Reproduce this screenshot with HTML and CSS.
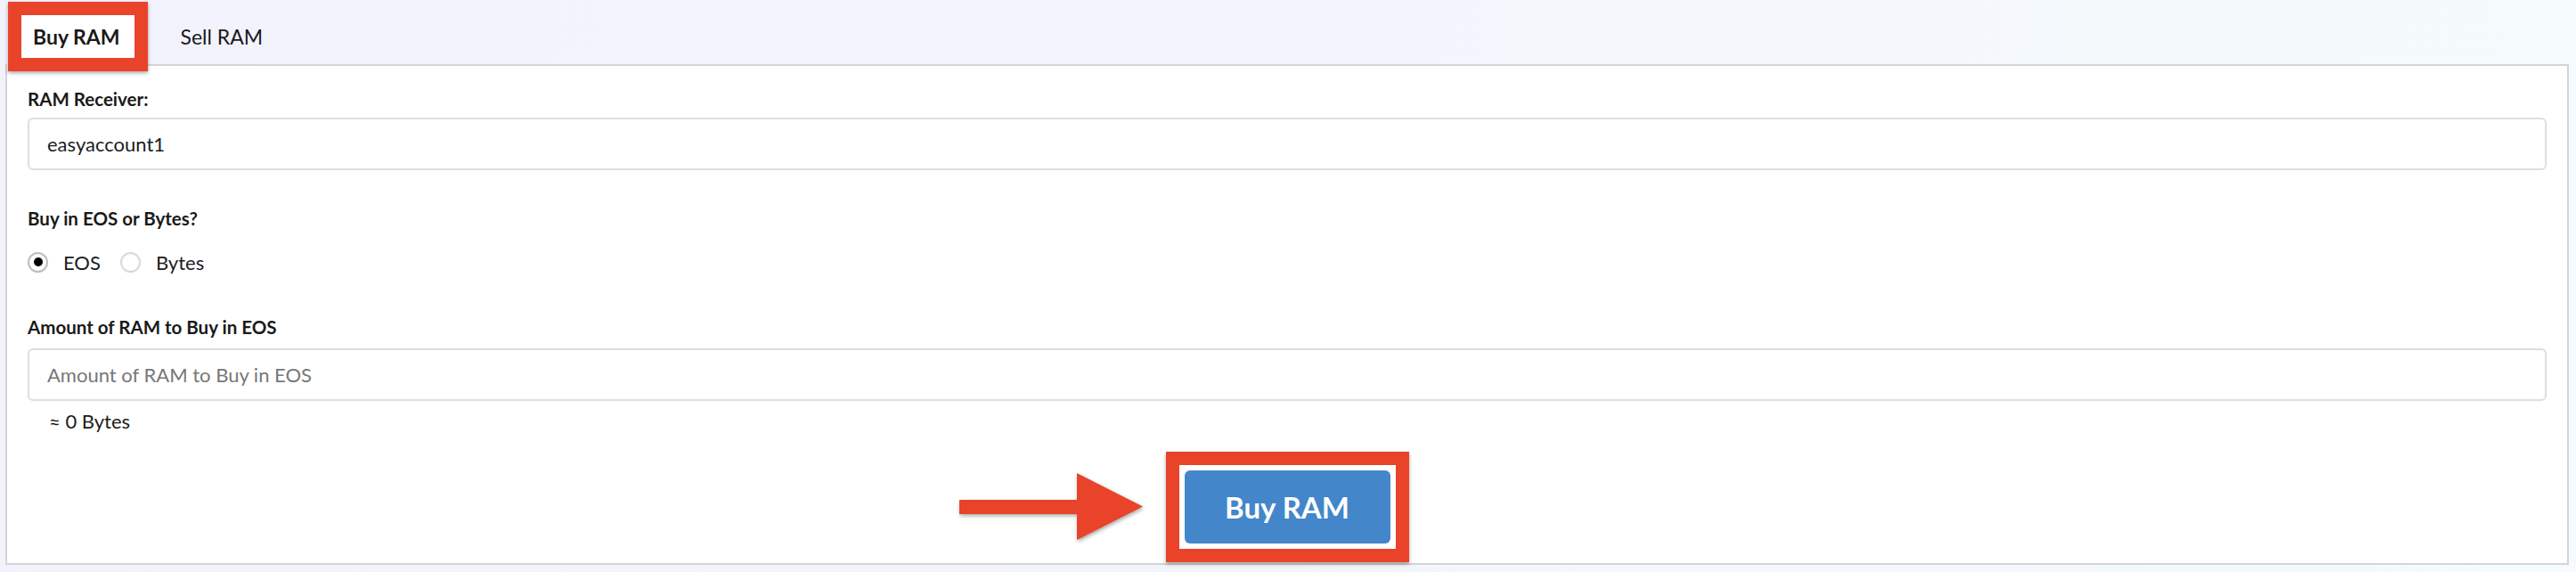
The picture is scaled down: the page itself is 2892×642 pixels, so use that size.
FILE: index.html
```html
<!DOCTYPE html>
<html lang="en">
<head>
<meta charset="utf-8">
<title>Buy RAM</title>
<link rel="stylesheet" href="styles.css">
</head>
<body>
<div class="page">
  <div class="tabs">
    <div class="tab active"><span class="tab-mark"></span>Buy RAM</div>
    <div class="tab">Sell RAM</div>
  </div>
  <div class="panel">
    <div class="lbl lbl-first">RAM Receiver:</div>
    <input class="field" type="text" value="easyaccount1">

    <div class="lbl lbl-radio">Buy in EOS or Bytes?</div>
    <div class="radios">
      <span class="radio checked"></span><span class="radio-text">EOS</span>
      <span class="radio"></span><span class="radio-text">Bytes</span>
    </div>

    <div class="lbl lbl-amount">Amount of RAM to Buy in EOS</div>
    <input class="field field-amount" type="text" placeholder="Amount of RAM to Buy in EOS">
    <div class="help">≈ 0 Bytes</div>

    <div class="actions">
      <div class="btn-mark">
        <svg class="arrow" width="206" height="75" viewBox="0 0 206 75" aria-hidden="true">
          <rect x="0" y="30" width="134" height="16" fill="#e9432a"/>
          <polygon points="132,0 206,37.5 132,75" fill="#e9432a"/>
        </svg>
        <button class="btn" type="button">Buy RAM</button>
      </div>
    </div>
  </div>
</div>
</body>
</html>
```

FILE: styles.css
```css
html, body {
  margin: 0;
  padding: 0;
}
body {
  width: 2892px;
  height: 642px;
  background: linear-gradient(90deg, #f2f2fd 0%, #f3f5fc 50%, #f5fbfc 100%);
  font-family: Lato, "Open Sans", "Liberation Sans", sans-serif;
  color: #1c1c1c;
  overflow: hidden;
}
.page {
  padding: 0 8px 8px 6px;
}
.tabs {
  display: flex;
  align-items: flex-end;
  padding-top: 10px;
  height: 62px;
  padding-left: 2px;
}
.tab {
  position: relative;
  height: 62px;
  line-height: 62px;
  padding: 0 29px;
  font-size: 23px;
  color: #1a1a1a;
}
.tab.active {
  font-weight: 700;
  background: #ffffff;
  height: 64px;
  margin-bottom: -2px;
  line-height: 62px;
  z-index: 2;
}
.tab + .tab {
  margin-left: 10px;
}
.tab-mark {
  position: absolute;
  left: 1px;
  top: -8px;
  width: 157px;
  height: 78px;
  box-sizing: border-box;
  border: 15px solid #e9432a;
  box-shadow: 0 2px 4px rgba(0, 0, 0, 0.35);
}
.panel {
  position: relative;
  border: 2px solid #d4d4d4;
  background: #ffffff;
  padding: 23px 23px 1px 23px;
}
.lbl {
  font-size: 20.5px;
  font-weight: 700;
  line-height: 28px;
  color: #1a1a1a;
}
.lbl-radio {
  margin-top: 40px;
}
.lbl-amount {
  margin-top: 44px;
}
.field {
  display: block;
  box-sizing: border-box;
  width: 100%;
  height: 59px;
  margin: 7px 0 0 0;
  padding: 0 20px;
  border: 2px solid #dedede;
  border-radius: 6px;
  background: #ffffff;
  font-family: Lato, "Open Sans", "Liberation Sans", sans-serif;
  font-size: 22px;
  color: #1c1c1c;
  outline: none;
}
.field-amount {
  margin-top: 10px;
}
.field::placeholder {
  color: #777777;
}
.radios {
  display: flex;
  align-items: center;
  height: 30px;
  margin-top: 20px;
  font-size: 22px;
}
.radio {
  box-sizing: border-box;
  width: 23px;
  height: 23px;
  border-radius: 50%;
  border: 2px solid #d9d9d9;
  background: #ffffff;
  display: flex;
  align-items: center;
  justify-content: center;
}
.radio.checked {
  border-color: #bdbdbd;
}
.radio.checked::after {
  content: "";
  width: 10px;
  height: 10px;
  border-radius: 50%;
  background: #000000;
}
.radio-text {
  margin-left: 17px;
  margin-right: 22px;
  color: #1c1c1c;
}
.help {
  margin: 8px 0 0 24px;
  font-size: 22px;
  line-height: 30px;
  color: #1c1c1c;
}
.actions {
  display: flex;
  justify-content: center;
  margin-top: 19px;
}
.btn-mark {
  position: relative;
  border: 15px solid #e9432a;
  padding: 6px;
  background: #ffffff;
  box-shadow: 0 2px 4px rgba(0, 0, 0, 0.35);
}
.arrow {
  position: absolute;
  left: -247px;
  top: 9px;
  overflow: visible;
  filter: drop-shadow(1px 2px 2px rgba(0, 0, 0, 0.35));
}
.btn {
  display: block;
  width: 231px;
  height: 82px;
  border: none;
  border-radius: 6px;
  background: #4386ca;
  color: #ffffff;
  font-family: Lato, "Open Sans", "Liberation Sans", sans-serif;
  font-weight: 700;
  font-size: 33px;
  padding: 0;
}
```
